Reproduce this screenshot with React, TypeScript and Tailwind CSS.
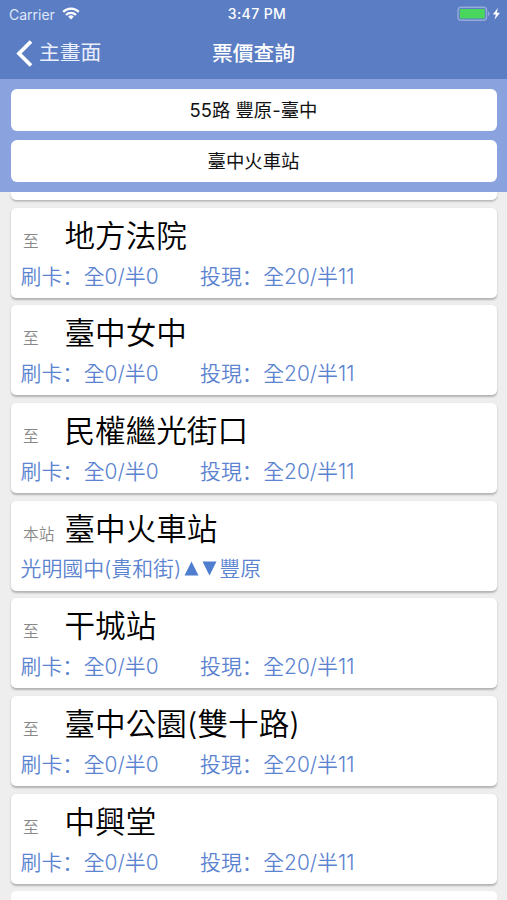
interface Stop {
    name: string;
    card?: string;
    cash?: string;
    route?: [string, string];
}

const STOPS: Stop[] = [
    { name: '地方法院', card: '全0/半0', cash: '全20/半11' },
    { name: '臺中女中', card: '全0/半0', cash: '全20/半11' },
    { name: '民權繼光街口', card: '全0/半0', cash: '全20/半11' },
    { name: '臺中火車站', route: ['光明國中(貴和街)', '豐原'] },
    { name: '干城站', card: '全0/半0', cash: '全20/半11' },
    { name: '臺中公園(雙十路)', card: '全0/半0', cash: '全20/半11' },
    { name: '中興堂', card: '全0/半0', cash: '全20/半11' },
];

const StatusBar = () => (
    <div className="grid h-[27px] grid-cols-3 items-center pl-[9px] pr-[6px] text-[14px] leading-none">
        <div className="flex items-center gap-[7px]">
            <span className="pt-[2px] text-[14px] text-[#dfe7f8]">Carrier</span>
            <svg width="18" height="13" viewBox="0 0 18 13" fill="none" stroke="white" strokeWidth="2.2">
                <path d="M1.2 4.9a11 11 0 0 1 15.6 0" />
                <path d="M4 7.9a7 7 0 0 1 10 0" />
                <path d="M9 12.6 6.2 9.7a4 4 0 0 1 5.6 0z" fill="white" stroke="none" />
            </svg>
        </div>
        <span className="whitespace-nowrap pl-[4px] pt-[1px] text-center font-medium tracking-[0.4px]">3:47 PM</span>
        <svg className="justify-self-end" width="44" height="16" viewBox="0 0 44 16">
            <rect x="1" y="1.2" width="28.5" height="13" rx="3" fill="none" stroke="#93aadb" strokeWidth="1.4" />
            <rect x="2.8" y="3" width="25" height="9.5" rx="1" fill="#48d75c" />
            <path d="M31 5.5c2 .7 2 4 0 4.7z" fill="#93aadb" />
            <path d="M41 1.7 35.8 8.5h3.1L37.5 13.7 43 6.7h-3.2z" fill="white" />
        </svg>
    </div>
);

// Full-width punctuation sits at the left of its box
const Fare = ({ label, value }: { label: string; value: string }) => (
    <span>
        {label}
        <span className="mr-[0.5px] font-['Noto_Sans_CJK_SC',sans-serif]">：</span>
        {value}
    </span>
);

const StopCard = ({ stop }: { stop: Stop }) => (
    <div className="h-[90.2px] shrink-0 rounded-[5px] bg-white pl-[10px] shadow-[0_1.5px_2px_rgba(0,0,0,0.25)]">
        <div className="flex h-[55px] items-baseline">
            <span className="w-[44px] shrink-0 pl-[2.5px] text-[15.7px] font-[350] text-[#888888]">
                {stop.route ? '本站' : '至'}
            </span>
            <span className="text-[30.6px] font-[350] leading-[56px] text-black">{stop.name}</span>
        </div>
        <div className="flex h-[26px] items-center whitespace-nowrap text-[20.9px] font-[350] leading-[26px] text-[#5b83d0]">
            {stop.route ? (
                <>
                    <span>{stop.route[0]}</span>
                    <svg className="ml-[2px] mr-px" width="35" height="15" viewBox="0 0 35 15" fill="#4f7dd0">
                        <path d="M8.5 .5 15.5 14.5H1.5zM19.5 .5h14l-7 14z" />
                    </svg>
                    <span>{stop.route[1]}</span>
                </>
            ) : (
                <>
                    <span className="w-[179.5px]">
                        <Fare label="刷卡" value={stop.card ?? ''} />
                    </span>
                    <Fare label="投現" value={stop.cash ?? ''} />
                </>
            )}
        </div>
    </div>
);

export default function App() {
    return (
        <div className="flex h-[900px] w-[507px] flex-col overflow-hidden bg-[#eeeeee] font-['Inter','Noto_Sans_CJK_TC',sans-serif]">
            <header className="h-[79px] shrink-0 bg-[#5b7dc4] text-white">
                <StatusBar />
                <div className="grid h-[52px] grid-cols-3 items-center text-[20.8px]">
                    <div className="flex items-center gap-[6px] pl-[16px] text-[#e9effb]">
                        <svg width="17" height="27" viewBox="0 0 17 27" fill="none" stroke="white" strokeWidth="3.8">
                            <path d="M15 1.5 3 13.5l12 12" />
                        </svg>
                        <span>主畫面</span>
                    </div>
                    <h1 className="pt-[1px] text-center font-medium">票價查詢</h1>
                </div>
            </header>

            <div className="flex h-[112.5px] shrink-0 flex-col gap-[9.5px] bg-[#8aa3de] px-[10.5px] pt-[9.5px] text-[18.4px] text-[#111111]">
                <button className="h-[42px] rounded-[6px] bg-white pt-[2px]">55路 豐原-臺中</button>
                <button className="h-[42px] rounded-[6px] bg-white pt-[2px]">臺中火車站</button>
            </div>

            <main className="flex flex-1 flex-col gap-[7.5px] overflow-hidden px-[10.5px]">
                <div className="h-[8.5px] shrink-0 rounded-b-[5px] bg-white shadow-[0_1.5px_2px_rgba(0,0,0,0.25)]" />
                {STOPS.map((stop) => (
                    <StopCard key={stop.name} stop={stop} />
                ))}
                <div className="h-[90px] shrink-0 rounded-[5px] bg-white" />
            </main>
        </div>
    );
}
